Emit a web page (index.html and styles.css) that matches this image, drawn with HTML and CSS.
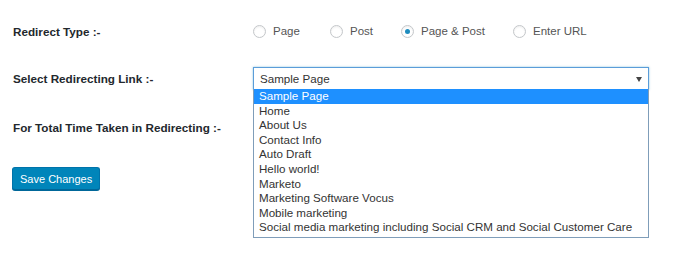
FILE: index.html
```html
<!DOCTYPE html>
<html lang="en">
<head>
  <meta charset="UTF-8">
  <title>Redirect Settings</title>
  <link rel="stylesheet" href="styles.css">
</head>
<body>

  <!-- Settings form -->
  <div class="settings">
    <div class="row row-type">
      <div class="label">Redirect Type :-</div>
      <div class="field radios">
        <label class="radio"><span class="dot"></span>Page</label>
        <label class="radio"><span class="dot"></span>Post</label>
        <label class="radio"><span class="dot checked"></span>Page &amp; Post</label>
        <label class="radio"><span class="dot"></span>Enter URL</label>
      </div>
    </div>

    <div class="row row-link">
      <div class="label">Select Redirecting Link :-</div>
      <div class="field">
        <div class="select">
          <span>Sample Page</span>
          <span class="arrow"></span>
          <!-- open dropdown list -->
          <ul class="options">
            <li class="selected">Sample Page</li>
            <li>Home</li>
            <li>About Us</li>
            <li>Contact Info</li>
            <li>Auto Draft</li>
            <li>Hello world!</li>
            <li>Marketo</li>
            <li>Marketing Software Vocus</li>
            <li>Mobile marketing</li>
            <li>Social media marketing including Social CRM and Social Customer Care</li>
          </ul>
        </div>
      </div>
    </div>

    <div class="row row-time">
      <div class="label">For Total Time Taken in Redirecting :-</div>
      <div class="field"></div>
    </div>

    <button class="btn">Save Changes</button>
  </div>

</body>
</html>
```

FILE: styles.css
```css
/* General Styles */
html, body {
  height: 100%;
}

body {
  margin: 0;
  background: #fff;
  font-family: 'Liberation Sans', Arial, sans-serif;
  color: #444;
}

.settings {
  padding-left: 13px;
  min-height: 264px;
}

/* Rows */
.row {
  display: flex;
  align-items: center;
}

.row-type {
  height: 62px;
}

.row-link {
  height: 33px;
}

.row-time {
  height: 65px;
}

.label {
  width: 240px;
  font-size: 11.7px;
  font-weight: bold;
  color: #23282d;
}

.field {
  flex: 1;
}

/* Radio buttons */
.radios {
  display: flex;
  font-size: 11.5px;
  color: #555;
}

.radio {
  display: flex;
  align-items: center;
}

.radio:nth-child(1) { width: 77px; }
.radio:nth-child(2) { width: 71px; }
.radio:nth-child(3) { width: 112px; }

.dot {
  width: 11px;
  height: 11px;
  border: 1px solid #c4c7ca;
  border-radius: 50%;
  box-shadow: inset 0 1px 2px rgba(0, 0, 0, 0.07);
  margin-right: 7px;
  display: flex;
  align-items: center;
  justify-content: center;
}

.dot.checked::after {
  content: "";
  width: 5px;
  height: 5px;
  border-radius: 50%;
  background: #1e8cbe;
}

/* Select */
.select {
  position: relative;
  width: 388px;
  height: 21px;
  padding-left: 6px;
  border: 1px solid #5b9dd9;
  box-shadow: 0 0 2px rgba(30, 140, 190, 0.5);
  font-size: 11.6px;
  color: #333;
  display: flex;
  align-items: center;
}

.arrow {
  position: absolute;
  right: 6px;
  top: 9px;
  border-left: 3px solid transparent;
  border-right: 3px solid transparent;
  border-top: 5px solid #444;
}

.options {
  position: absolute;
  left: -1px;
  top: 21px;
  width: 394px;
  margin: 0;
  padding: 0 0 2px;
  list-style: none;
  background: #fff;
  border: 1px solid #7f9db9;
  border-top: none;
  z-index: 10;
}

.options li {
  height: 14.6px;
  line-height: 14.6px;
  padding-left: 5px;
  white-space: nowrap;
  color: #333;
}

.options li.selected {
  background: #1e90ff;
  color: #fff;
}

/* Button */
.btn {
  margin-left: -1px;
  margin-top: 7px;
  height: 23px;
  padding: 0 7px;
  background: #0085ba;
  border: 1px solid #0073aa;
  border-bottom-color: #006799;
  border-radius: 3px;
  box-shadow: 0 1px 0 #006799;
  color: #fff;
  font-family: 'Liberation Sans', Arial, sans-serif;
  font-size: 11px;
  cursor: pointer;
}
```
